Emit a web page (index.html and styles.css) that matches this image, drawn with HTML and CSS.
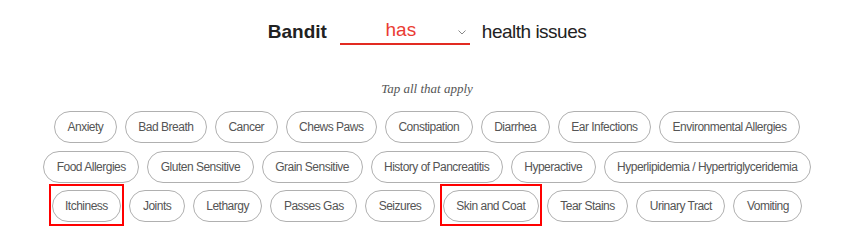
FILE: index.html
```html
<!DOCTYPE html>
<html lang="en">
<head>
<meta charset="utf-8">
<title>Health issues</title>
<link rel="stylesheet" href="styles.css">
</head>
<body>
<main class="page">
  <div class="sentence">
    <span class="pet-name">Bandit</span>
    <div class="select">
      <span class="select-value">has</span>
      <svg class="chevron" width="8" height="5" viewBox="0 0 8 5"><path d="M0.5 0.5 L4 4 L7.5 0.5" fill="none" stroke="#888" stroke-width="1"/></svg>
    </div>
    <span class="sentence-end">health issues</span>
  </div>
  <p class="hint">Tap all that apply</p>
  <div class="pills">
    <button class="pill">Anxiety</button>
    <button class="pill">Bad Breath</button>
    <button class="pill">Cancer</button>
    <button class="pill">Chews Paws</button>
    <button class="pill">Constipation</button>
    <button class="pill">Diarrhea</button>
    <button class="pill">Ear Infections</button>
    <button class="pill">Environmental Allergies</button>
    <button class="pill">Food Allergies</button>
    <button class="pill">Gluten Sensitive</button>
    <button class="pill">Grain Sensitive</button>
    <button class="pill">History of Pancreatitis</button>
    <button class="pill">Hyperactive</button>
    <button class="pill">Hyperlipidemia / Hypertriglyceridemia</button>
    <button class="pill pill-marked">Itchiness</button>
    <button class="pill">Joints</button>
    <button class="pill">Lethargy</button>
    <button class="pill">Passes Gas</button>
    <button class="pill">Seizures</button>
    <button class="pill pill-marked">Skin and Coat</button>
    <button class="pill">Tear Stains</button>
    <button class="pill">Urinary Tract</button>
    <button class="pill">Vomiting</button>
  </div>
</main>
</body>
</html>
```
FILE: styles.css
```css
* { box-sizing: border-box; }
html, body { margin: 0; padding: 0; background: #fff; }
body { font-family: "Liberation Sans", Arial, sans-serif; color: #222; }

.page {
  width: 850px;
  min-height: 252px;
  padding: 18px 0 0 4px;
  display: flex;
  flex-direction: column;
  align-items: center;
}

.sentence {
  display: flex;
  align-items: flex-end;
  gap: 12px;
  font-size: 19px;
  line-height: 24px;
}
.pet-name { font-weight: bold; color: #222; margin-right: 1px; }
.sentence-end { letter-spacing: -0.5px; color: #222; }

.select {
  width: 130px;
  height: 27px;
  display: flex;
  align-items: flex-start;
  border-bottom: 2px solid #e22b22;
  padding-left: 4px;
  margin-bottom: -1px;
}
.select-value { flex: 1; text-align: center; color: #ea3b33; }
.chevron { margin-right: 4px; margin-top: 12px; }

.hint {
  margin: 0;
  padding-top: 37px;
  font-family: "Liberation Serif", "Times New Roman", serif;
  font-style: italic;
  font-size: 13px;
  line-height: 16px;
  color: #555;
}

.pills {
  width: 800px;
  margin-top: 14px;
  display: flex;
  flex-wrap: wrap;
  justify-content: center;
  column-gap: 8px;
  row-gap: 7.5px;
}

.pill {
  position: relative;
  height: 32px;
  padding: 0 12.5px;
  border: 1px solid #b0b0b0;
  border-radius: 16px;
  background: #fff;
  font-family: "Liberation Sans", Arial, sans-serif;
  font-size: 12px;
  letter-spacing: -0.5px;
  color: #555;
  white-space: nowrap;
  cursor: pointer;
}

.pill-marked::after {
  content: "";
  position: absolute;
  top: -7px;
  bottom: -5px;
  left: -4px;
  right: -4px;
  border: 2px solid #f00;
  pointer-events: none;
}
```
